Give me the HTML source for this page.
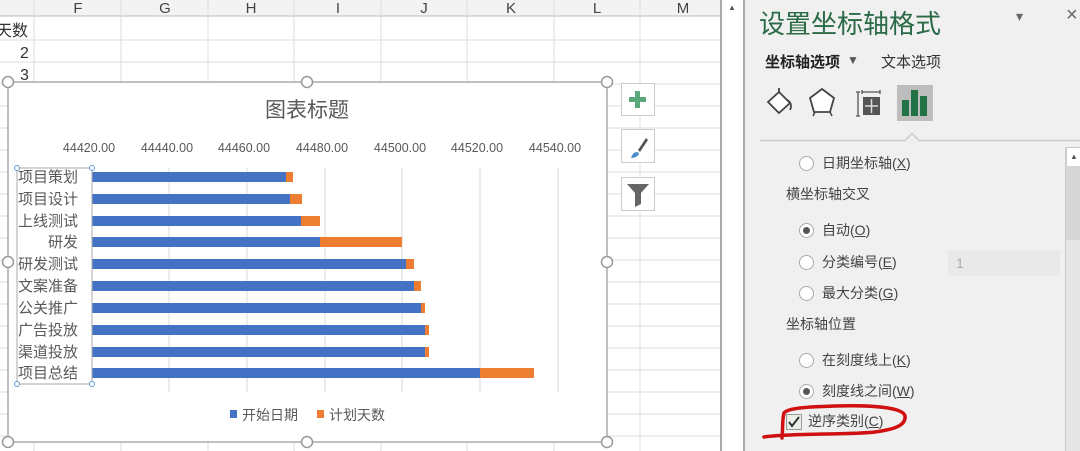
<!DOCTYPE html>
<html><head><meta charset="utf-8"><style>
body{margin:0;width:1080px;height:451px;overflow:hidden;background:#fff;font-family:"Liberation Sans","Noto Sans CJK SC",sans-serif;position:relative}
.a{position:absolute;white-space:nowrap}
.t{color:#444;font-size:14px}
.r{position:absolute;width:13px;height:13px;border:1px solid #aaa;border-radius:50%;background:#fff}
.r.on::after{content:"";position:absolute;left:3px;top:3px;width:7px;height:7px;border-radius:50%;background:#555}
</style></head><body>
<svg class="a" style="left:0;top:0" width="722" height="451">
<rect x="0" y="0" width="722" height="16" fill="#f3f3f3"/>
<line x1="0" y1="16" x2="722" y2="16" stroke="#bbb"/>
<g stroke="#ddd">
<line x1="34" y1="0" x2="34" y2="451"/><line x1="121" y1="0" x2="121" y2="451"/><line x1="208" y1="0" x2="208" y2="451"/><line x1="294" y1="0" x2="294" y2="451"/><line x1="381" y1="0" x2="381" y2="451"/><line x1="467" y1="0" x2="467" y2="451"/><line x1="554" y1="0" x2="554" y2="451"/><line x1="640" y1="0" x2="640" y2="451"/>
<line x1="0" y1="40" x2="722" y2="40"/><line x1="0" y1="62" x2="722" y2="62"/><line x1="0" y1="84" x2="722" y2="84"/><line x1="0" y1="106" x2="722" y2="106"/><line x1="0" y1="128" x2="722" y2="128"/><line x1="0" y1="150" x2="722" y2="150"/><line x1="0" y1="172" x2="722" y2="172"/><line x1="0" y1="194" x2="722" y2="194"/><line x1="0" y1="216" x2="722" y2="216"/><line x1="0" y1="238" x2="722" y2="238"/><line x1="0" y1="260" x2="722" y2="260"/><line x1="0" y1="282" x2="722" y2="282"/><line x1="0" y1="304" x2="722" y2="304"/><line x1="0" y1="326" x2="722" y2="326"/><line x1="0" y1="348" x2="722" y2="348"/><line x1="0" y1="370" x2="722" y2="370"/><line x1="0" y1="392" x2="722" y2="392"/><line x1="0" y1="414" x2="722" y2="414"/><line x1="0" y1="436" x2="722" y2="436"/>
</g>
<g font-size="15" fill="#444" text-anchor="middle" font-family="Liberation Sans">
<text x="78" y="13">F</text><text x="165" y="13">G</text><text x="251" y="13">H</text><text x="338" y="13">I</text><text x="424" y="13">J</text><text x="511" y="13">K</text><text x="597" y="13">L</text><text x="683" y="13">M</text>
</g>
<text x="-4" y="36" font-size="16" fill="#333">天数</text>
<text x="20" y="58" font-size="16" fill="#333">2</text>
<text x="20" y="80" font-size="16" fill="#333">3</text>
<rect x="8" y="82" width="599" height="360" fill="#fff" stroke="#aaa" stroke-width="1.5"/>
<text x="307" y="117" font-size="21" fill="#595959" text-anchor="middle">图表标题</text>
<g font-size="12.5" fill="#595959" text-anchor="middle" font-family="Liberation Sans">
<text x="89" y="152">44420.00</text><text x="167" y="152">44440.00</text><text x="244" y="152">44460.00</text><text x="322" y="152">44480.00</text><text x="400" y="152">44500.00</text><text x="477" y="152">44520.00</text><text x="555" y="152">44540.00</text>
</g>
<g stroke="#d9d9d9"><line x1="169" y1="168" x2="169" y2="392"/><line x1="247" y1="168" x2="247" y2="392"/><line x1="325" y1="168" x2="325" y2="392"/><line x1="402" y1="168" x2="402" y2="392"/><line x1="480" y1="168" x2="480" y2="392"/><line x1="558" y1="168" x2="558" y2="392"/></g>
<g fill="#4472c4">
<rect x="92" y="172" width="194" height="10"/><rect x="92" y="194" width="198" height="10"/><rect x="92" y="216" width="209" height="10"/><rect x="92" y="237" width="228" height="10"/><rect x="92" y="259" width="314" height="10"/><rect x="92" y="281" width="322" height="10"/><rect x="92" y="303" width="329" height="10"/><rect x="92" y="325" width="333" height="10"/><rect x="92" y="347" width="333" height="10"/><rect x="92" y="368" width="388" height="10"/>
</g>
<g fill="#ed7d31">
<rect x="286" y="172" width="7" height="10"/><rect x="290" y="194" width="12" height="10"/><rect x="301" y="216" width="19" height="10"/><rect x="320" y="237" width="82" height="10"/><rect x="406" y="259" width="8" height="10"/><rect x="414" y="281" width="7" height="10"/><rect x="421" y="303" width="4" height="10"/><rect x="425" y="325" width="4" height="10"/><rect x="425" y="347" width="4" height="10"/><rect x="480" y="368" width="54" height="10"/>
</g>
<rect x="17" y="168" width="75" height="216" fill="none" stroke="#aaa"/>
<g fill="#fff" stroke="#5b9bd5"><circle cx="17" cy="168" r="2.5"/><circle cx="92" cy="168" r="2.5"/><circle cx="17" cy="384" r="2.5"/><circle cx="92" cy="384" r="2.5"/></g>
<g font-size="15" fill="#595959" text-anchor="end">
<text x="78" y="182">项目策划</text><text x="78" y="204">项目设计</text><text x="78" y="226">上线测试</text><text x="78" y="247">研发</text><text x="78" y="269">研发测试</text><text x="78" y="291">文案准备</text><text x="78" y="313">公关推广</text><text x="78" y="335">广告投放</text><text x="78" y="357">渠道投放</text><text x="78" y="378">项目总结</text>
</g>
<rect x="230" y="410" width="7" height="8" fill="#4472c4"/><text x="242" y="420" font-size="14" fill="#595959">开始日期</text>
<rect x="317" y="410" width="7" height="8" fill="#ed7d31"/><text x="329" y="420" font-size="14" fill="#595959">计划天数</text>
<g fill="#fff" stroke="#999" stroke-width="1.5">
<circle cx="8" cy="82" r="5.5"/><circle cx="307" cy="82" r="5.5"/><circle cx="607" cy="82" r="5.5"/><circle cx="8" cy="262" r="5.5"/><circle cx="607" cy="262" r="5.5"/><circle cx="8" cy="442" r="5.5"/><circle cx="307" cy="442" r="5.5"/><circle cx="607" cy="442" r="5.5"/>
</g>
<g fill="#fff" stroke="#ccc"><rect x="621.5" y="83.5" width="33" height="32"/><rect x="621.5" y="129.5" width="33" height="33"/><rect x="621.5" y="177.5" width="33" height="33"/></g>
<path d="M635 91h5v6h6v5h-6v6h-5v-6h-6v-5h6z" fill="#5aa77a"/>
<path d="M646 138l-8 12 2 2 8-12z" fill="#555"/><path d="M631 158c2-6 5-7 8-5 0 3-4 5-8 5z" fill="#4a8fd0"/>
<path d="M627 184h22l-8 9v11l-6 3v-14z" fill="#666"/>
<rect x="720" y="0" width="2" height="451" fill="#aaa"/>
</svg>
<div class="a" style="left:722px;top:0;width:21px;height:451px;background:#fff;border-right:2px solid #aaa"></div>
<div class="a" style="left:728px;top:3px;font-size:8px;color:#555">▲</div>
<div class="a" style="left:745px;top:0;width:335px;height:451px;background:#f0f0f0"></div>
<div class="a" style="left:759px;top:4px;font-size:26px;color:#2b6a46">设置坐标轴格式</div>
<div class="a" style="left:1016px;top:8px;font-size:14px;color:#666">▾</div>
<div class="a" style="left:1066px;top:4px;font-size:20px;color:#666">×</div>
<div class="a" style="left:765px;top:51px;font-size:15px;color:#222;font-weight:bold">坐标轴选项</div>
<div class="a" style="left:847px;top:53px;font-size:12px;color:#555">▼</div>
<div class="a" style="left:881px;top:51px;font-size:15px;color:#333">文本选项</div>
<svg class="a" style="left:760px;top:80px" width="320" height="70">
<path d="M8 22l11-10 11 11-11 10z" fill="#fff" stroke="#444" stroke-width="1.8"/><path d="M19 12v-4m8 12c4 2 5 6 3 10" stroke="#444" stroke-width="1.8" fill="none"/>
<path d="M62 9l12 9-4 14h-16l-4-14z" fill="#fff" stroke="#444" stroke-width="1.8"/><path d="M55 32l-2 4m17-4l2 4" stroke="#444" stroke-width="1.5"/>
<path d="M98 12v24M96 12h4M96 36h4M102 12h18M102 10v4M120 10v4" stroke="#555" stroke-width="1.3" fill="none"/><rect x="103" y="17" width="17" height="18" fill="#555"/><path d="M111.5 19v14M105 26h13" stroke="#ddd" stroke-width="1.5"/>
<rect x="137" y="5" width="36" height="36" fill="#bdbdbd"/><rect x="142" y="20" width="7" height="16" fill="#217346"/><rect x="151" y="10" width="7" height="26" fill="#217346"/><rect x="160" y="16" width="7" height="20" fill="#217346"/>
<path d="M0 60.5H145l7-7 7 7H320" stroke="#ccc" stroke-width="1.5" fill="none"/>
</svg>
<div class="a" style="left:1065px;top:147px;width:15px;height:304px;background:#e6e6e6;border-left:1px solid #ccc"></div>
<div class="a" style="left:1066px;top:147px;width:14px;height:18px;background:#fff;border:1px solid #ccc;font-size:8px;color:#555;text-align:center;line-height:18px">▲</div>
<div class="a" style="left:1066px;top:166px;width:14px;height:74px;background:#d6d6d6"></div>
<div class="r" style="left:799px;top:156px"></div><div class="a t" style="left:822px;top:153px">日期坐标轴(<u>X</u>)</div>
<div class="a t" style="left:786px;top:184px">横坐标轴交叉</div>
<div class="r on" style="left:799px;top:223px"></div><div class="a t" style="left:822px;top:220px">自动(<u>O</u>)</div>
<div class="r" style="left:799px;top:255px"></div><div class="a t" style="left:822px;top:252px">分类编号(<u>E</u>)</div>
<div class="a" style="left:948px;top:250px;width:112px;height:26px;background:#e9e9e9;color:#aaa;font-size:14px;line-height:26px;text-indent:8px">1</div>
<div class="r" style="left:799px;top:286px"></div><div class="a t" style="left:822px;top:283px">最大分类(<u>G</u>)</div>
<div class="a t" style="left:786px;top:314px">坐标轴位置</div>
<div class="r" style="left:799px;top:353px"></div><div class="a t" style="left:822px;top:350px">在刻度线上(<u>K</u>)</div>
<div class="r on" style="left:799px;top:384px"></div><div class="a t" style="left:822px;top:381px">刻度线之间(<u>W</u>)</div>
<div class="a" style="left:786px;top:414px;width:14px;height:14px;border:1px solid #999;background:#e8f0e8"></div>
<svg class="a" style="left:786px;top:414px" width="16" height="16"><path d="M3 8l3 4 7-9" stroke="#333" stroke-width="2" fill="none"/></svg>
<div class="a t" style="left:808px;top:411px">逆序类别(<u>C</u>)</div>
<svg class="a" style="left:760px;top:400px" width="150" height="45"><path d="M4 37C30 33 90 35 115 32 138 29 146 24 145 16 143 7 110 5 75 6 45 7 28 8 24 13 22 20 23 30 22 38" stroke="#d01010" stroke-width="3.5" fill="none" stroke-linecap="round"/></svg>
</body></html>
